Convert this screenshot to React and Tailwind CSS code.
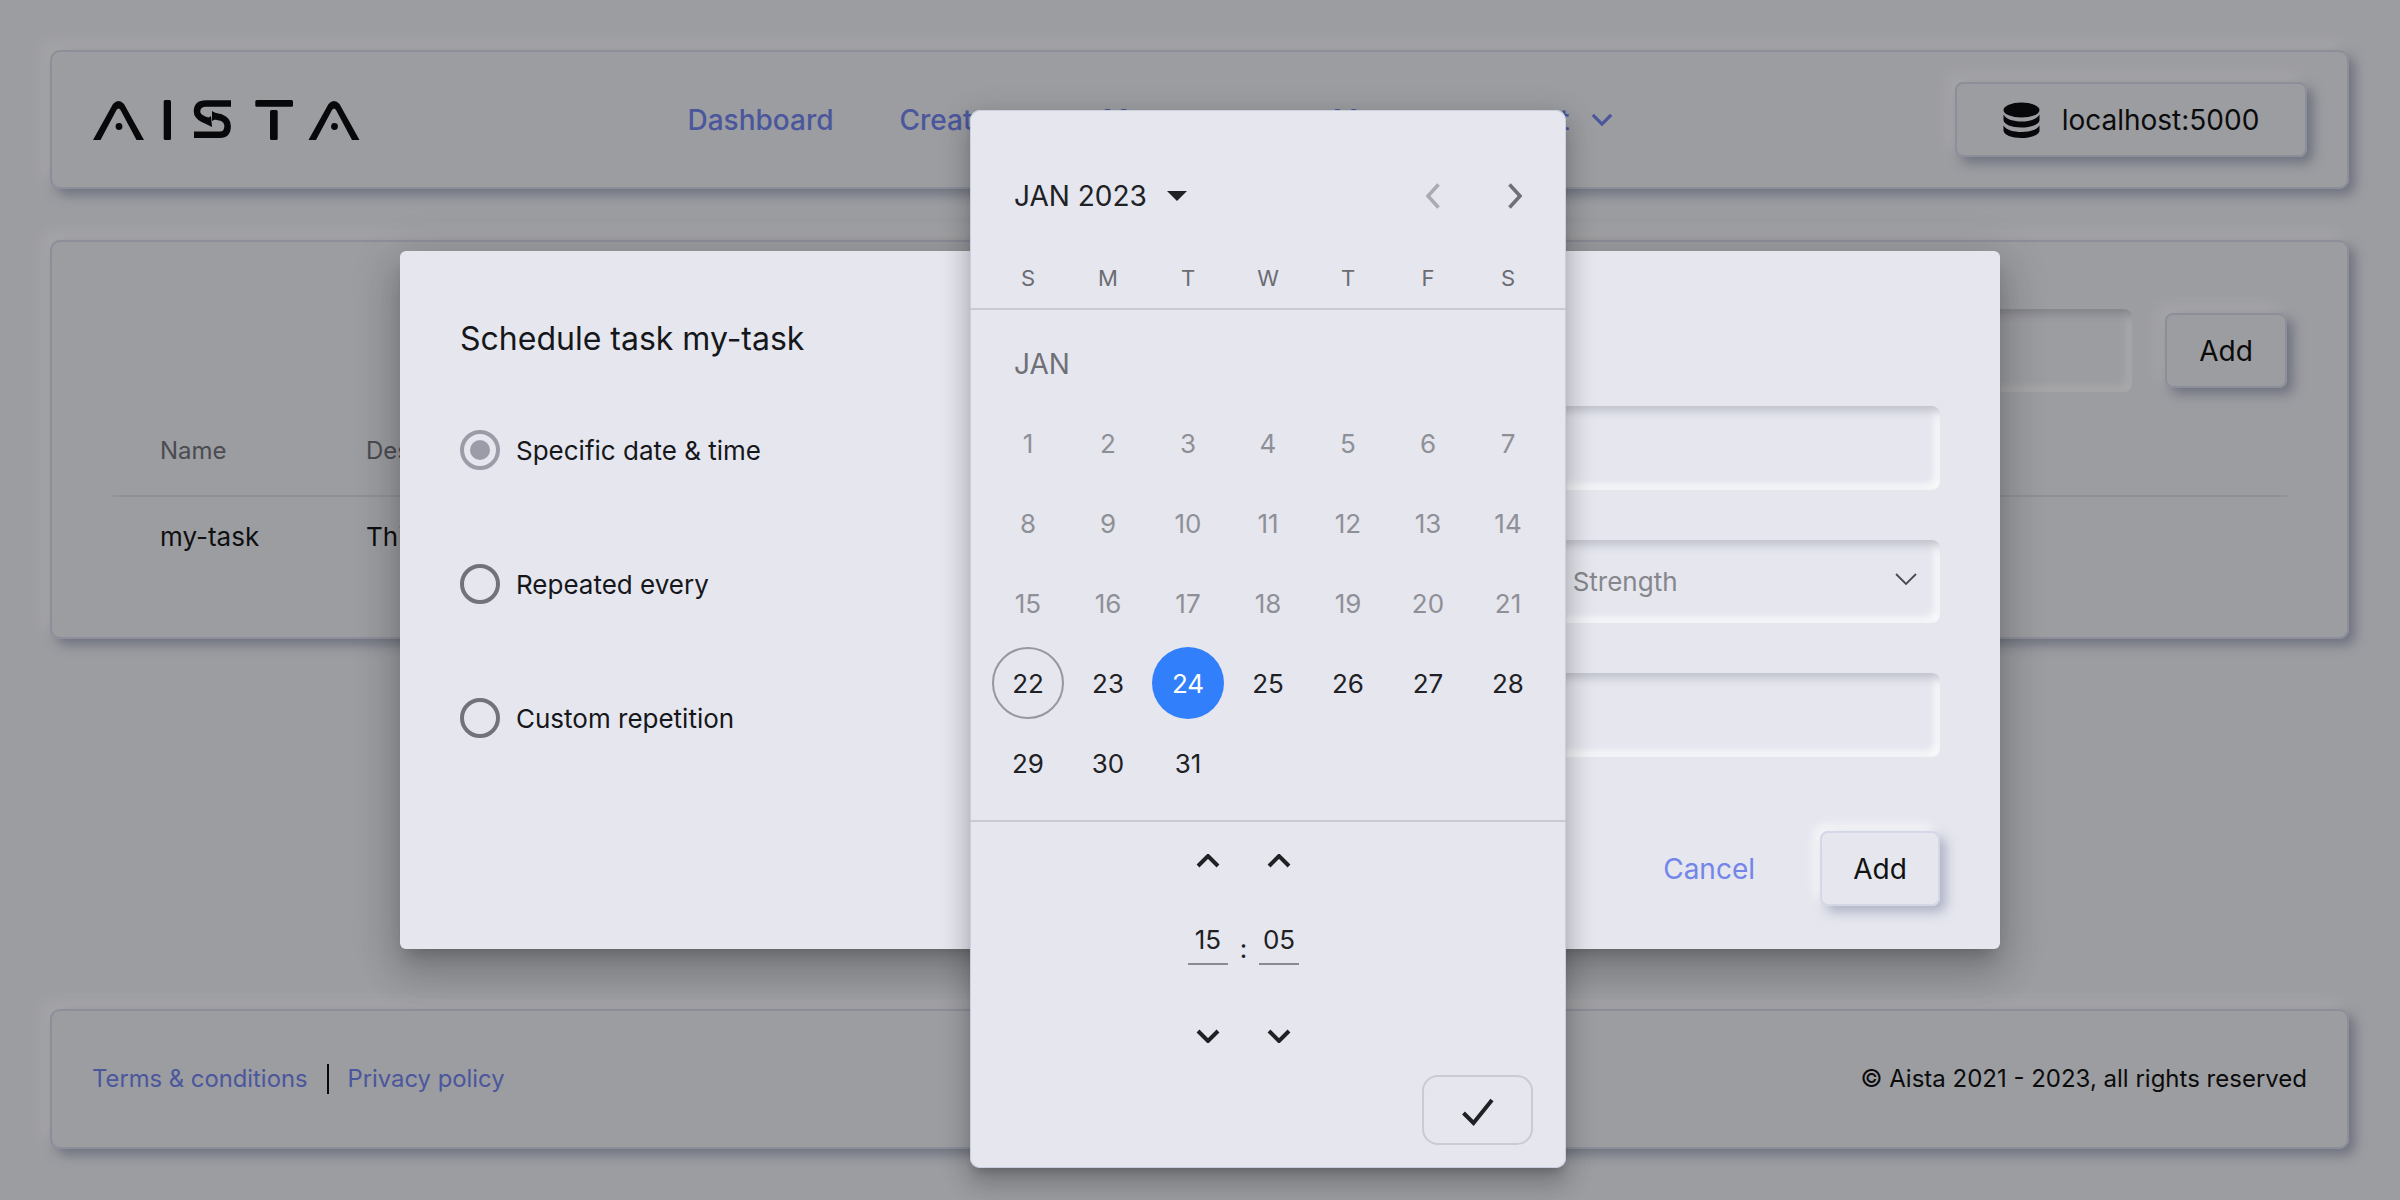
import React from 'react';

const WEEK_DAYS = ['S', 'M', 'T', 'W', 'T', 'F', 'S'];
const DAYS = Array.from({ length: 31 }, (_, i) => i + 1);

const raised = 'border-2 border-[#cfd3e2] shadow-[6px_6px_12px_rgba(120,128,155,0.6),-8px_-8px_16px_rgba(255,255,255,0.6)]';
const inset = 'shadow-[inset_5px_5px_9px_rgba(170,172,185,0.65),inset_-5px_-5px_9px_rgba(255,255,255,0.85)]';

const Chevron = ({ dir = 'down', className = '', strokeWidth = 4 }) => (
    <svg className={className} viewBox="0 0 24 14" fill="none" stroke="currentColor" strokeWidth={strokeWidth}>
        <path d={dir === 'down' ? 'M2 2l10 10L22 2' : 'M2 12L12 2l10 10'} />
    </svg>
);

const Side = ({ dir, className }) => (
    <svg className={className} viewBox="0 0 14 26" fill="none" stroke="currentColor" strokeWidth="3.5">
        <path d={dir === 'left' ? 'M12.5 1.5L2 13l10.5 11.5' : 'M1.5 1.5L12 13 1.5 24.5'} />
    </svg>
);

const LogoA = ({ x }) => (
    <g transform={`translate(${x} 0)`}>
        <path d="M0 40L20 4Q25.5-2 31 4L51 40H43.5L27.5 10Q25.5 7 23.5 10L7.5 40Z" />
        <circle cx="26" cy="26.5" r="3.4" />
    </g>
);

const Logo = () => (
    <svg className="w-[268px] h-[40px] text-[#0d0d0f]" viewBox="0 0 268 40" fill="currentColor">
        <LogoA x={0} />
        <rect x="70.7" y="0" width="7.3" height="40" rx="1.5" />
        <path d="M138 3.5H113Q104 3.5 104 11.5Q104 16 110 19L117 21.5" fill="none" stroke="currentColor" strokeWidth="6.5" />
        <path d="M119 27l-1-11-9 6z" />
        <path d="M101 34.8H127Q134.6 34.8 134.6 26Q134.6 20 128 17.5L121 16" fill="none" stroke="currentColor" strokeWidth="6.5" />
        <path d="M119 11l0 10 9-5z" />
        <rect x="162.3" y="0" width="37.7" height="6.8" rx="1.5" />
        <rect x="177" y="10" width="7.7" height="30" rx="1.5" />
        <LogoA x={215.5} />
    </svg>
);

const DatabaseIcon = () => (
    <svg className="w-[37px] h-[36px] text-[#0d0d0f]" viewBox="0 0 37 36" fill="currentColor">
        <ellipse cx="18.5" cy="8" rx="18" ry="7.5" />
        <path d="M0.5 12.5C3 17.5 11 19.5 18.5 19.5S34 17.5 36.5 12.5V18C36.5 22.5 28 25.5 18.5 25.5S0.5 22.5 0.5 18Z" />
        <path d="M0.5 23.5C3 28 11 30 18.5 30S34 28 36.5 23.5V28.5C36.5 33 28 36 18.5 36S0.5 33 0.5 28.5Z" />
    </svg>
);

const Radio = ({ label, checked }) => (
    <label className="flex items-center gap-[16px] h-[40px]">
        <span className={`w-[40px] h-[40px] rounded-full border-[4px] flex items-center justify-center ${checked ? 'border-[#9b9ca8]' : 'border-[#727379]'}`}>
            {checked && <span className="w-[20px] h-[20px] rounded-full bg-[#9b9ca8]"></span>}
        </span>
        <span className="text-[26px] text-[#16171a]">{label}</span>
    </label>
);

const NavMenu = ({ label, className = 'gap-[20px]' }) => (
    <a className={`flex items-center ${className}`}>
        {label}
        <Chevron className="w-[22px] h-[13px]" strokeWidth={3.5} />
    </a>
);

function Page() {
    return (
        <div className="h-[1200px] bg-[#e6e7ee] pl-[50px] pr-[51px] pt-[50px] pb-[51px] flex flex-col">
            {/* header */}
            <header className={`h-[139px] rounded-[10px] pl-[41px] pr-[40px] flex items-center justify-between ${raised}`}>
                <Logo />
                <nav className="mr-[16px] flex items-center gap-[66px] text-[28px] font-medium text-[#6f80e6]">
                    <a>Dashboard</a>
                    <NavMenu label="Create" className="gap-[26px]" />
                    <NavMenu label="Manage" className="gap-[34px]" />
                    <NavMenu label="Manage account" className="gap-[20px] tracking-[1px]" />
                </nav>
                <button className={`w-[352px] h-[75px] rounded-[8px] flex items-center justify-center gap-[22px] text-[28px] text-[#111] ${raised}`}>
                    <DatabaseIcon />
                    localhost:5000
                </button>
            </header>

            {/* tasks card */}
            <main className={`mt-[51px] h-[399px] rounded-[10px] pl-[61px] pr-[60px] pt-[67px] ${raised}`}>
                <div className="flex justify-end items-center gap-[33px]">
                    <div className={`w-[700px] h-[83px] rounded-[8px] ${inset}`}></div>
                    <button className={`w-[122px] h-[75px] rounded-[8px] text-[28px] text-[#111] ${raised}`}>Add</button>
                </div>
                <div className="flex items-center h-[105px] pt-[15px] pl-[47px] border-b-2 border-[#d5d6df] text-[24px] text-[#6f7076]">
                    <span className="w-[206px]">Name</span>
                    <span>Description</span>
                </div>
                <div className="flex items-center h-[78px] pl-[47px] text-[26px] text-[#16171a]">
                    <span className="w-[206px]">my-task</span>
                    <span>This is a task</span>
                </div>
            </main>

            {/* footer */}
            <footer className={`mt-auto h-[140px] rounded-[10px] pl-[40px] pr-[40px] flex items-center justify-between text-[24px] ${raised}`}>
                <div className="flex items-center text-[23.8px] text-[#6f80e6]">
                    <a>Terms &amp; conditions</a>
                    <span className="w-[2px] h-[30px] bg-[#0d0d0f] mx-[19px]"></span>
                    <a>Privacy policy</a>
                </div>
                <span className="text-[#111]">© Aista 2021 - 2023, all rights reserved</span>
            </footer>
        </div>
    );
}

function ScheduleDialog() {
    return (
        <div className="relative w-[1600px] h-[698px] rounded-[6px] bg-[#e5e6ee] px-[60px] shadow-[0_11px_15px_-7px_rgba(0,0,0,0.2),0_24px_38px_3px_rgba(0,0,0,0.14),0_9px_46px_8px_rgba(0,0,0,0.12)] flex">
            <div className="w-[600px] shrink-0">
                <h2 className="mt-[66px] h-[44px] leading-[44px] text-[32px] text-[#16171a]">Schedule task my-task</h2>
                <div className="mt-[69px] flex flex-col gap-[94px]">
                    <Radio label="Specific date & time" checked />
                    <Radio label="Repeated every" />
                    <Radio label="Custom repetition" />
                </div>
            </div>
            <div className="flex-1 pt-[155px] flex flex-col">
                <div className={`h-[84px] rounded-[8px] ${inset}`}></div>
                <div className={`mt-[50px] h-[83px] rounded-[8px] flex items-center justify-between pl-[385px] pr-[22px] ${inset}`}>
                    <span className="text-[26px] text-[#86878d]">Password Strength</span>
                    <Chevron className="w-[24px] h-[14px] mb-[6px] text-[#4a4b50]" strokeWidth={1.8} />
                </div>
                <div className={`mt-[50px] h-[84px] rounded-[8px] ${inset}`}></div>
                <div className="mt-[74px] flex items-center justify-end gap-[65px]">
                    <button className="text-[28px] text-[#7385e8]">Cancel</button>
                    <button className="w-[120px] h-[75px] rounded-[8px] text-[28px] text-[#111] border-2 border-[#d3d7e6] shadow-[6px_6px_12px_rgba(150,156,180,0.7),-6px_-6px_12px_rgba(255,255,255,0.7)]">Add</button>
                </div>
            </div>
        </div>
    );
}

function TimeColumn({ value }) {
    return (
        <div className="w-[40px] flex flex-col items-center text-[#202124]">
            <Chevron dir="up" className="w-[24px] h-[14px] my-[6px]" />
            <div className="mt-[40px] w-[40px] h-[51px] border-b-2 border-[#8a8b92] text-center text-[26px] leading-[52px]">{value}</div>
            <Chevron className="w-[24px] h-[14px] mt-[64px]" />
        </div>
    );
}

function DatePicker() {
    return (
        <div className="absolute left-[970px] top-[110px] w-[596px] h-[1058px] rounded-[10px] bg-[#e5e6ee] flex flex-col shadow-[inset_0_0_0_1px_#c9cfdf,0_8px_10px_-5px_rgba(0,0,0,0.2),0_16px_24px_2px_rgba(0,0,0,0.14),0_6px_30px_5px_rgba(0,0,0,0.12)]">
            <div className="mt-[60px] h-[52px] pl-[44px] pr-[44px] flex items-center">
                <span className="text-[28px] text-[#202124]">JAN 2023</span>
                <span className="ml-[20px] w-0 h-0 border-x-[10px] border-x-transparent border-t-[10px] border-t-[#202124]"></span>
                <Side dir="left" className="ml-auto w-[14px] h-[26px] text-[#a9aab2]" />
                <Side dir="right" className="ml-[68px] w-[14px] h-[26px] text-[#6f7076]" />
            </div>
            <div className="mt-[33px] mx-[18px] grid grid-cols-7 h-[46px] items-center text-center text-[22px] text-[#6b6c72]">
                {WEEK_DAYS.map((d, i) => <span key={i}>{d}</span>)}
            </div>
            <div className="mt-[7px] h-[2px] bg-[#c9cad4]"></div>
            <div className="mt-[35px] h-[38px] leading-[38px] pl-[44px] text-[28px] text-[#6f7076]">JAN</div>
            <div className="mt-[20px] mx-[18px] grid grid-cols-7 auto-rows-[80px]">
                {DAYS.map(d => (
                    <div key={d} className="flex items-center justify-center">
                        <span className={`w-[72px] h-[72px] rounded-full flex items-center justify-center text-[26px] ${
                            d === 24
                                ? 'bg-[#327ffb] text-white'
                                : d === 22
                                    ? 'border-2 border-[#97989d] text-[#202124]'
                                    : d < 22
                                        ? 'text-[#8f9096]'
                                        : 'text-[#202124]'
                        }`}>{d}</span>
                    </div>
                ))}
            </div>
            <div className="mt-[17px] h-[2px] bg-[#c9cad4]"></div>
            <div className="mt-[26px] ml-[218px] flex items-start">
                <TimeColumn value="15" />
                <span className="w-[31px] mt-[81px] text-center text-[26px] leading-[40px] text-[#202124]">:</span>
                <TimeColumn value="05" />
            </div>
            <button className="mt-[32px] self-end mr-[33px] w-[111px] h-[70px] rounded-[16px] border-2 border-[#c9cad4] flex items-center justify-center">
                <svg className="w-[32px] h-[28px] mt-[4px] text-[#202124]" viewBox="0 0 32 28" fill="none" stroke="currentColor" strokeWidth="4">
                    <path d="M1.5 15l10 10L30 2" />
                </svg>
            </button>
        </div>
    );
}

export default function App() {
    return (
        <div className="relative h-[1200px] overflow-hidden font-['Inter',sans-serif]">
            <Page />
            <div className="absolute inset-0 bg-[rgba(0,0,0,0.32)] flex items-center justify-center">
                <ScheduleDialog />
            </div>
            <DatePicker />
        </div>
    );
}
